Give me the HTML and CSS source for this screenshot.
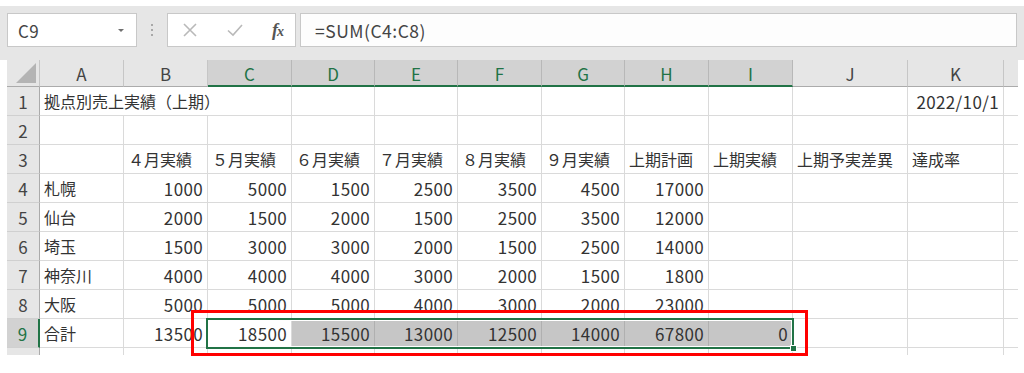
FILE: index.html
```html
<!DOCTYPE html>
<html lang="ja">
<head>
<meta charset="utf-8">
<title>拠点別売上実績</title>
<link rel="stylesheet" href="styles.css">
</head>
<body>
<div class="app">
  <div class="toolbar">
    <div class="namebox"><span>C9</span><span class="caret"></span></div>
    <div class="grip"><i></i><i></i><i></i></div>
    <div class="fxbox">
      <svg class="ic" width="16" height="16" viewBox="0 0 16 16"><path d="M2 2L14 14M14 2L2 14" stroke="#b9b9b9" stroke-width="1.6" fill="none"/></svg>
      <svg class="ic" width="18" height="16" viewBox="0 0 18 16"><path d="M2 8.5L7 13L16 3" stroke="#b9b9b9" stroke-width="1.6" fill="none"/></svg>
      <span class="fx">f<span class="fxx">x</span></span>
    </div>
    <div class="formula">=SUM(C4:C8)</div>
  </div>

  <div class="sheet">
    <div class="corner"><span class="tri"></span></div>
    <div class="ch">A</div><div class="ch">B</div><div class="ch sel-h">C</div><div class="ch sel-h">D</div><div class="ch sel-h">E</div><div class="ch sel-h">F</div><div class="ch sel-h">G</div><div class="ch sel-h">H</div><div class="ch sel-h">I</div><div class="ch">J</div><div class="ch">K</div><div class="ch end"></div>

    <div class="rh">1</div>
    <div class="c t span3">拠点別売上実績（上期）</div><div class="c"></div><div class="c"></div><div class="c"></div><div class="c"></div><div class="c"></div><div class="c"></div><div class="c"></div><div class="c n">2022/10/1</div><div class="c end"></div>

    <div class="rh">2</div>
    <div class="c"></div><div class="c"></div><div class="c"></div><div class="c"></div><div class="c"></div><div class="c"></div><div class="c"></div><div class="c"></div><div class="c"></div><div class="c"></div><div class="c"></div><div class="c end"></div>

    <div class="rh">3</div>
    <div class="c"></div><div class="c t">４月実績</div><div class="c t">５月実績</div><div class="c t">６月実績</div><div class="c t">７月実績</div><div class="c t">８月実績</div><div class="c t">９月実績</div><div class="c t">上期計画</div><div class="c t">上期実績</div><div class="c t">上期予実差異</div><div class="c t">達成率</div><div class="c end"></div>

    <div class="rh">4</div>
    <div class="c t">札幌</div><div class="c n">1000</div><div class="c n">5000</div><div class="c n">1500</div><div class="c n">2500</div><div class="c n">3500</div><div class="c n">4500</div><div class="c n">17000</div><div class="c"></div><div class="c"></div><div class="c"></div><div class="c end"></div>

    <div class="rh">5</div>
    <div class="c t">仙台</div><div class="c n">2000</div><div class="c n">1500</div><div class="c n">2000</div><div class="c n">1500</div><div class="c n">2500</div><div class="c n">3500</div><div class="c n">12000</div><div class="c"></div><div class="c"></div><div class="c"></div><div class="c end"></div>

    <div class="rh">6</div>
    <div class="c t">埼玉</div><div class="c n">1500</div><div class="c n">3000</div><div class="c n">3000</div><div class="c n">2000</div><div class="c n">1500</div><div class="c n">2500</div><div class="c n">14000</div><div class="c"></div><div class="c"></div><div class="c"></div><div class="c end"></div>

    <div class="rh">7</div>
    <div class="c t">神奈川</div><div class="c n">4000</div><div class="c n">4000</div><div class="c n">4000</div><div class="c n">3000</div><div class="c n">2000</div><div class="c n">1500</div><div class="c n">1800</div><div class="c"></div><div class="c"></div><div class="c"></div><div class="c end"></div>

    <div class="rh">8</div>
    <div class="c t">大阪</div><div class="c n">5000</div><div class="c n">5000</div><div class="c n">5000</div><div class="c n">4000</div><div class="c n">3000</div><div class="c n">2000</div><div class="c n">23000</div><div class="c"></div><div class="c"></div><div class="c"></div><div class="c end"></div>

    <div class="rh sel-r">9</div>
    <div class="c t">合計</div><div class="c n">13500</div><div class="c n">18500</div><div class="c n hl">15500</div><div class="c n hl">13000</div><div class="c n hl">12500</div><div class="c n hl">14000</div><div class="c n hl">67800</div><div class="c n hl">0</div><div class="c"></div><div class="c"></div><div class="c end"></div>

    <div class="rh part"></div>
    <div class="c part"></div><div class="c part"></div><div class="c part"></div><div class="c part"></div><div class="c part"></div><div class="c part"></div><div class="c part"></div><div class="c part"></div><div class="c part"></div><div class="c part"></div><div class="c part"></div><div class="c part end"></div>

    <div class="selection"><span class="handle"></span></div>
  </div>

  <div class="callout"></div>
</div>
</body>
</html>
```

FILE: styles.css
```css
* { box-sizing: border-box; }
html, body { margin: 0; padding: 0; background: #ffffff; }
body {
  font-family: "Noto Sans CJK JP", "Noto Sans", sans-serif;
  font-size: 16px;
  color: #333333;
}
.app {
  position: relative;
  width: 1024px;
  height: 373px;
  padding-top: 6px;
}

/* toolbar */
.toolbar {
  background: #e6e6e6;
  height: 54px;
  padding: 7px 7px 13px 7px;
  display: flex;
  align-items: stretch;
}
.namebox {
  width: 130px;
  background: #ffffff;
  border: 1px solid #c8c8c8;
  display: flex;
  align-items: center;
  justify-content: space-between;
  padding: 0 12px 0 10px;
  color: #444444;
  font-size: 17px;
  letter-spacing: 0.4px;
}
.caret {
  width: 0; height: 0;
  border-left: 3px solid transparent;
  border-right: 3px solid transparent;
  border-top: 3px solid #707070;
}
.grip {
  width: 30px;
  display: flex;
  flex-direction: column;
  align-items: center;
  justify-content: center;
  gap: 3px;
}
.grip i {
  display: block;
  width: 2px; height: 2px;
  background: #a8a8a8;
}
.fxbox {
  width: 129px;
  background: #ffffff;
  border: 1px solid #c8c8c8;
  display: flex;
  align-items: center;
  padding: 0 12px 0 14px;
  justify-content: space-between;
}
.fx {
  font-family: "Liberation Serif", "DejaVu Serif", serif;
  font-style: italic;
  font-weight: bold;
  font-size: 18px;
  color: #555555;
  line-height: 1;
  letter-spacing: -1px;
}
.fxx { font-size: 14px; }
.formula {
  flex: 1;
  margin-left: 4px;
  background: #fdfdfd;
  border: 1px solid #c8c8c8;
  display: flex;
  align-items: center;
  padding-left: 14px;
  color: #444444;
  font-size: 17.5px;
  letter-spacing: 0.5px;
}

/* sheet */
.sheet {
  position: relative;
  margin-left: 7px;
  display: grid;
  grid-template-columns: 33px 84px 84px 84px 83px 83px 84px 83px 84px 84px 115px 96px 14px;
  grid-template-rows: 27px repeat(9, 29px) 7px;
  width: 1011px;
}
.corner, .ch, .rh {
  background: #e6e6e6;
  color: #444444;
  display: flex;
  align-items: center;
  justify-content: center;
  font-size: 17px;
}
.corner {
  border-right: 1px solid #c6c6c6;
  border-bottom: 1px solid #ababab;
  align-items: flex-end;
  justify-content: flex-end;
  padding: 0 3px 3px 0;
}
.tri {
  width: 0; height: 0;
  border-left: 20px solid transparent;
  border-bottom: 20px solid #b4b4b4;
}
.ch {
  border-right: 1px solid #c6c6c6;
  border-bottom: 1px solid #ababab;
  padding-top: 1px;
}
.ch.end { border-right: none; }
.ch.sel-h {
  background: #d2d2d2;
  color: #217346;
  border-bottom: 2px solid #217346;
  border-right-color: #b8b8b8;
}
.rh {
  border-right: 1px solid #ababab;
  border-bottom: 1px solid #d0d0d0;
}
.rh.sel-r {
  background: #d2d2d2;
  color: #217346;
  border-right: 2px solid #217346;
}
.rh.part { border-bottom: none; }

.c {
  border-right: 1px solid #dadada;
  border-bottom: 1px solid #dadada;
  display: flex;
  align-items: center;
  white-space: nowrap;
  overflow: visible;
}
.c.t { justify-content: flex-start; padding-left: 4px; }
.c.n {
  justify-content: flex-end;
  padding-right: 4px;
  font-size: 17px;
  letter-spacing: 0.35px;
}
.c.span3 { grid-column: span 3; }
.c.end { border-right: none; }
.c.part { border-bottom: none; }
.c.hl {
  background: #c6c6c6;
  border-right-color: #b0b0b0;
  border-bottom-color: #c6c6c6;
}

/* selection frame: absolutely positioned inside its grid area */
.selection {
  position: absolute;
  grid-row: 10 / 11;
  grid-column: 4 / 11;
  top: -1px;
  bottom: -1px;
  left: -2px;
  right: -1px;
  border: 2px solid #217346;
  box-shadow: inset 0 0 0 1px #ffffff;
  z-index: 2;
  pointer-events: none;
}
.handle {
  position: absolute;
  right: -5px;
  bottom: -5px;
  width: 7px;
  height: 7px;
  background: #217346;
  border: 1px solid #ffffff;
}

/* red annotation frame */
.callout {
  position: absolute;
  left: 191px;
  top: 310px;
  width: 617px;
  height: 46px;
  border: 3px solid #ff0000;
  z-index: 3;
  pointer-events: none;
}
```
